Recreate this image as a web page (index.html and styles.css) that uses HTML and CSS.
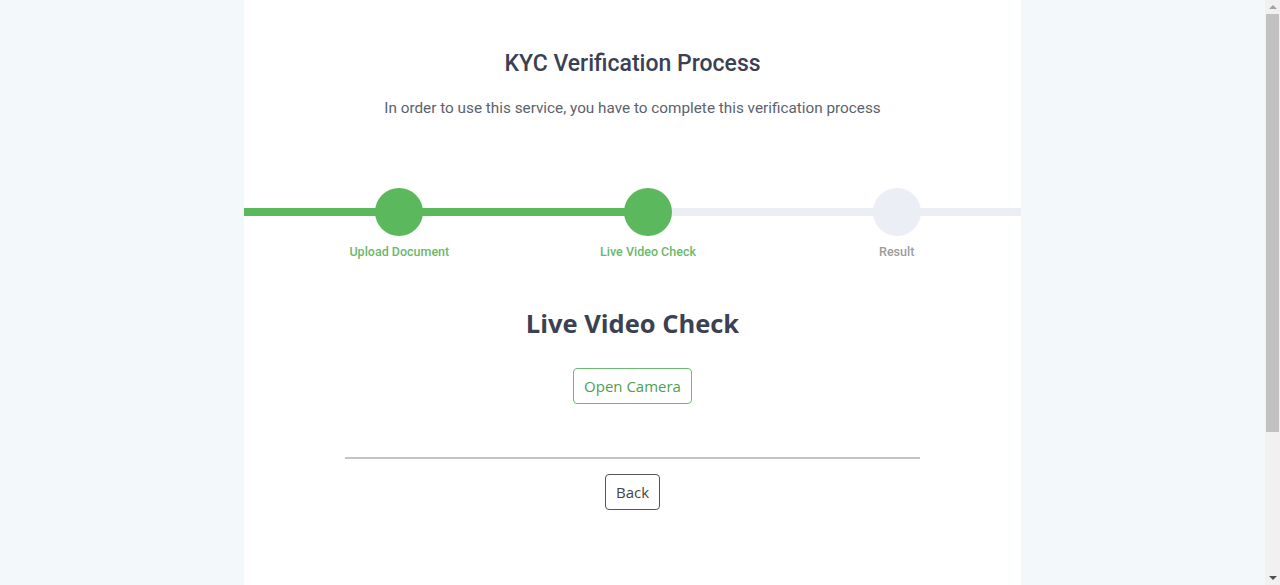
FILE: index.html
```html
<!DOCTYPE html>
<html lang="en">
<head>
<meta charset="utf-8">
<title>KYC Verification Process</title>
<link rel="stylesheet" href="styles.css">
</head>
<body>
<div class="viewport">
  <main class="card">
    <header class="intro">
      <h1 class="title">KYC Verification Process</h1>
      <p class="subtitle">In order to use this service, you have to complete this verification process</p>
    </header>
    <section class="progress">
      <div class="track"><div class="track-fill"></div></div>
      <ol class="steps">
        <li class="step done"><span class="dot"></span><span class="label">Upload Document</span></li>
        <li class="step done"><span class="dot"></span><span class="label">Live Video Check</span></li>
        <li class="step"><span class="dot"></span><span class="label">Result</span></li>
      </ol>
    </section>
    <section class="panel">
      <h2 class="panel-title">Live Video Check</h2>
      <button class="btn btn-green" type="button">Open Camera</button>
      <hr class="divider">
      <button class="btn btn-dark" type="button">Back</button>
    </section>
  </main>
</div>
<div class="scrollbar" aria-hidden="true">
  <span class="sb-arrow sb-up"></span>
  <span class="sb-track"><span class="sb-thumb"></span></span>
  <span class="sb-arrow sb-down"></span>
</div>
</body>
</html>
```
FILE: styles.css
```css
html, body {
  margin: 0;
  padding: 0;
}
body {
  background: #f3f8fb;
  font-family: Roboto, "Liberation Sans", sans-serif;
  display: flex;
  align-items: flex-start;
}
.viewport {
  flex: 1;
}
.scrollbar {
  position: sticky;
  top: 0;
  width: 15px;
  height: 100vh;
  background: #f1f1f1;
  display: flex;
  flex-direction: column;
}
.sb-arrow {
  height: 14px;
  display: flex;
  align-items: center;
  justify-content: center;
}
.sb-up::before {
  content: "";
  border-left: 4px solid transparent;
  border-right: 4px solid transparent;
  border-bottom: 4px solid #a3a3a3;
}
.sb-down::before {
  content: "";
  border-left: 4px solid transparent;
  border-right: 4px solid transparent;
  border-top: 4px solid #505050;
}
.sb-track {
  flex: 1;
  padding: 0 1px;
}
.sb-thumb {
  display: block;
  height: 418px;
  background: #c1c1c1;
}
.card {
  width: 777px;
  margin: 0 auto;
  background: #ffffff;
  min-height: 780px;
  padding-top: 50px;
  box-sizing: border-box;
}
.intro {
  text-align: center;
}
.title {
  margin: 0;
  font-size: 23px;
  font-weight: 500;
  color: #3b4152;
  line-height: 28px;
}
.subtitle {
  margin: 21px 0 0;
  font-size: 15.3px;
  color: #5c626c;
  line-height: 18px;
}
.progress {
  position: relative;
  margin-top: 71px;
}
.track {
  position: absolute;
  left: 0;
  right: 0;
  top: 20px;
  height: 8px;
  background: #ebeff5;
}
.track-fill {
  width: 403px;
  height: 100%;
  background: #5cb85c;
}
.steps {
  position: relative;
  list-style: none;
  margin: 0;
  padding: 0 0 0 31px;
  display: grid;
  grid-template-columns: repeat(3, 1fr);
}
.step {
  display: flex;
  flex-direction: column;
  align-items: center;
}
.dot {
  width: 48px;
  height: 48px;
  border-radius: 50%;
  background: #ebeff5;
}
.label {
  margin-top: 8px;
  font-size: 12.5px;
  font-weight: 500;
  line-height: 16px;
  color: #9c9c9c;
}
.step.done .dot {
  background: #5cb85c;
}
.step.done .label {
  color: #6bb86b;
}
.panel {
  display: flex;
  flex-direction: column;
  align-items: center;
  margin-top: 45px;
  font-family: "Open Sans", "Liberation Sans", sans-serif;
}
.panel-title {
  margin: 0;
  font-size: 25.5px;
  font-weight: 700;
  color: #3b4152;
  line-height: 36px;
}
.btn {
  font-family: "Open Sans", "Liberation Sans", sans-serif;
  font-size: 15px;
  line-height: 20px;
  padding: 7px 10px;
  background: #fff;
  border-radius: 4px;
  cursor: pointer;
}
.btn-green {
  margin-top: 27px;
  border: 1px solid #6dbb70;
  color: #4f9e52;
}
.btn-dark {
  border: 1px solid #555;
  color: #444;
}
.divider {
  width: 575px;
  margin: 53px 0 15px;
  border: 0;
  border-top: 2px solid #c4c4c4;
}
```
